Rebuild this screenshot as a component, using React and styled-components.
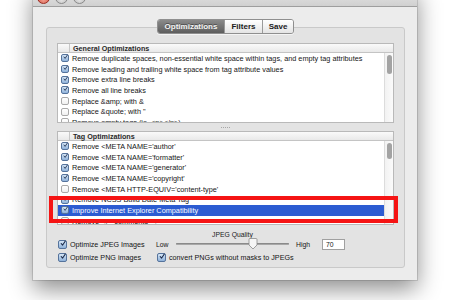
import React from 'react'
import styled, { createGlobalStyle } from 'styled-components'

const GlobalStyle = createGlobalStyle`
    html, body {
        margin: 0;
        padding: 0;
        background: #fff;
    }
    body {
        font-family: "Liberation Sans", Arial, sans-serif;
        font-size: 7.3px;
        color: #141414;
    }
`

const Stage = styled.div`
    width: 450px;
    height: 300px;
    overflow: hidden;
    padding-left: 33px;
    box-sizing: border-box;
    background: #fff;
`

const Window = styled.div`
    width: 384px;
    height: 294px;
    margin-top: -14px;
    background: #ececec;
    display: flex;
    flex-direction: column;
    box-shadow: 0 9px 22px rgba(0, 0, 0, 0.45), 0 0 0 1px rgba(0, 0, 0, 0.12);
`

const TitleBar = styled.div`
    height: 20px;
    flex: none;
    position: relative;
    display: flex;
    align-items: center;
    gap: 5px;
    padding-left: 4px;
    background: linear-gradient(#ececec, #d0d0d0);
    border-bottom: 1px solid #9e9e9e;
`

const Light = styled.span`
    width: 11px;
    height: 11px;
    border-radius: 50%;
    background: ${p => p.red ? 'radial-gradient(circle at 50% 70%, #f2a090, #c83a2a)' : 'radial-gradient(circle at 50% 70%, #e6e6e6, #a8a8a8)'};
    border: 1px solid ${p => p.red ? '#9a2a20' : '#8a8a8a'};
    margin-top: 2px;
`

const Title = styled.div`
    position: absolute;
    left: 0;
    right: 0;
    top: 3px;
    text-align: center;
    font-size: 12px;
    color: #3a3a3a;
`

const Body = styled.div`
    flex: 1;
    display: flex;
    flex-direction: column;
    padding: 12px 12px 12px 13px;
`

const Segments = styled.div`
    align-self: center;
    display: flex;
    height: 13px;
    margin-bottom: -7px;
    position: relative;
    z-index: 2;
    border: 1px solid #8f8f8f;
    border-radius: 3px;
    overflow: hidden;
    box-shadow: 0 1px 0 rgba(255, 255, 255, 0.6);
`

const Segment = styled.div`
    display: flex;
    align-items: center;
    justify-content: center;
    width: ${p => p.w}px;
    font-size: 8px;
    font-weight: bold;
    color: ${p => p.active ? '#f4f4f4' : '#202020'};
    background: ${p => p.active ? 'linear-gradient(#8a8a8a, #5e5e5e)' : 'linear-gradient(#ffffff, #e4e4e4)'};
    border-left: ${p => p.first ? 'none' : '1px solid #9a9a9a'};
    text-shadow: ${p => p.active ? '0 -1px 0 rgba(0,0,0,0.4)' : 'none'};
`

const Panel = styled.div`
    flex: 1;
    position: relative;
    display: flex;
    flex-direction: column;
    padding: 15px 10px 0 10px;
    background: #e3e3e3;
    border: 1px solid #c9c9c9;
    border-radius: 3px;
`

const List = styled.div`
    height: ${p => p.h}px;
    flex: none;
    display: flex;
    flex-direction: column;
    background: #fff;
    border: 1px solid #b9b9b9;
    box-sizing: border-box;
    overflow: hidden;
`

const Header = styled.div`
    height: 8px;
    flex: none;
    display: flex;
    background: linear-gradient(#fafafa, #e9e9e9);
    border-bottom: 1px solid #c4c4c4;
    font-weight: bold;
    font-size: 7.2px;
    color: #2a2a2a;
`

const HeadCell = styled.div`
    width: ${p => p.w ? p.w + 'px' : 'auto'};
    flex: ${p => p.w ? 'none' : '1'};
    display: flex;
    align-items: center;
    padding-left: ${p => p.pad || 0}px;
    border-right: ${p => p.line ? '1px solid #c8c8c8' : 'none'};
`

const ListBody = styled.div`
    flex: 1;
    display: flex;
    min-height: 0;
`

const Rows = styled.div`
    flex: 1;
    min-width: 0;
`

const Row = styled.div`
    height: 10.7px;
    display: flex;
    align-items: center;
    gap: 3px;
    padding-left: 3px;
    white-space: nowrap;
    background: ${p => p.selected ? '#2c5cd2' : 'transparent'};
    color: ${p => p.selected ? '#fff' : '#161616'};
`

const Track = styled.div`
    width: 9px;
    flex: none;
    border-left: 1px solid #dcdcdc;
    background: linear-gradient(90deg, #f2f2f2, #fbfbfb);
    padding: 2px 0 0 2px;
    box-sizing: border-box;
`

const Thumb = styled.div`
    width: 5px;
    height: ${p => p.h}px;
    margin-top: ${p => p.top}px;
    border-radius: 3px;
    background: #a3a3a3;
`

const Box = styled.span`
    width: ${p => p.size}px;
    height: ${p => p.size}px;
    flex: none;
    box-sizing: border-box;
    border-radius: 2px;
    border: 1px solid ${p => p.on ? '#55739c' : '#a9a9a9'};
    background: ${p => p.on ? 'linear-gradient(#d6e6f6, #8fb2da)' : 'linear-gradient(#ffffff, #f0f0f0)'};
    display: flex;
    align-items: center;
    justify-content: center;
    overflow: visible;
`

const Splitter = styled.div`
    height: 8px;
    flex: none;
    display: flex;
    align-items: center;
    justify-content: center;
    gap: 1px;
`

const Dot = styled.span`
    width: 1px;
    height: 1px;
    background: #a6a6a6;
`

const Controls = styled.div`
    display: grid;
    grid-template-columns: 99px 20px 113px 33px 24px;
    grid-template-rows: 8px 12px 14px;
    margin-top: 5px;
    align-items: center;
`

const Check = styled.div`
    display: flex;
    align-items: center;
    gap: 3px;
    padding-left: 1px;
    font-size: 7.2px;
    white-space: nowrap;
    grid-column: ${p => p.col || 'auto'};
    grid-row: ${p => p.row};
`

const QualityLabel = styled.div`
    grid-column: 3;
    grid-row: 1;
    text-align: center;
    font-size: 6.8px;
    color: #202020;
`

const Small = styled.div`
    grid-row: 2;
    font-size: 6.8px;
    padding-left: ${p => p.pad || 0}px;
`

const Slider = styled.div`
    grid-column: 3;
    grid-row: 2;
    position: relative;
    height: 12px;
    display: flex;
    align-items: center;
`

const Rail = styled.div`
    flex: 1;
    height: 2px;
    border-radius: 1px;
    background: #a8a8a8;
    box-shadow: inset 0 1px 0 #8a8a8a;
`

const Knob = styled.svg`
    position: absolute;
    left: 72px;
    top: 0;
`

const Field = styled.div`
    grid-column: 5;
    grid-row: 2;
    height: 11px;
    box-sizing: border-box;
    border: 1px solid #a0a0a0;
    background: #fff;
    font-size: 6.8px;
    display: flex;
    align-items: center;
    padding-left: 3px;
    width: 23px;
`

const Highlight = styled.div`
    position: absolute;
    left: 2px;
    top: 168px;
    width: 349px;
    height: 27px;
    box-sizing: border-box;
    border: 4px solid #f51414;
    pointer-events: none;
`

const Tick = ({ size }) => (
    <svg width={size + 2} height={size + 2} viewBox="0 0 10 10" style={{ marginTop: -2, marginLeft: 1 }}>
        <path d="M2 5 L4.2 7.8 L8.8 1" fill="none" stroke="#1c2c4c" strokeWidth="1.7" strokeLinecap="round" strokeLinejoin="round" />
    </svg>
)

const CheckBox = ({ on, size = 8 }) => (
    <Box on={on} size={size}>{on && <Tick size={size} />}</Box>
)

const general = [
    [true, 'Remove duplicate spaces, non-essential white space within tags, and empty tag attributes'],
    [true, 'Remove leading and trailing white space from tag attribute values'],
    [true, 'Remove extra line breaks'],
    [true, 'Remove all line breaks'],
    [false, 'Replace &amp; with &'],
    [false, 'Replace &quote; with "'],
    [false, 'Remove empty tags (ie. <p></p>)'],
]

const tags = [
    [true, "Remove <META NAME='author'"],
    [true, "Remove <META NAME='formatter'"],
    [true, "Remove <META NAME='generator'"],
    [true, "Remove <META NAME='copyright'"],
    [false, "Remove <META HTTP-EQUIV='content-type'"],
    [true, 'Remove NCSS Build Date Meta Tag'],
    [true, 'Improve Internet Explorer Compatibility', true],
    [false, 'Remove <!-- comments -->'],
]

const OptionList = ({ title, items, h, thumb }) => (
    <List h={h}>
        <Header>
            <HeadCell w={11} line />
            <HeadCell pad={3}>{title}</HeadCell>
            <HeadCell w={9} />
        </Header>
        <ListBody>
            <Rows>
                {items.map(([on, text, selected]) => (
                    <Row key={text} selected={selected}>
                        <CheckBox on={on} />
                        <span>{text}</span>
                    </Row>
                ))}
            </Rows>
            <Track>
                <Thumb h={thumb.h} top={thumb.top} />
            </Track>
        </ListBody>
    </List>
)

export default function App() {
    return (
        <Stage>
            <GlobalStyle />
            <Window>
                <TitleBar>
                    <Light red />
                    <Light />
                    <Light />
                    <Title>Preferences</Title>
                </TitleBar>
                <Body>
                    <Segments>
                        <Segment first active w={66}>Optimizations</Segment>
                        <Segment w={37}>Filters</Segment>
                        <Segment w={30}>Save</Segment>
                    </Segments>
                    <Panel>
                        <OptionList title="General Optimizations" items={general} h={80} thumb={{ top: 0, h: 19 }} />
                        <Splitter>
                            {[0, 1, 2, 3, 4].map(i => <Dot key={i} />)}
                        </Splitter>
                        <OptionList title="Tag Optimizations" items={tags} h={94} thumb={{ top: 0, h: 16 }} />
                        <Controls>
                            <QualityLabel>JPEG Quality</QualityLabel>
                            <Check row={2}><CheckBox on size={9} />Optimize JPEG Images</Check>
                            <Small>Low</Small>
                            <Slider>
                                <Rail />
                                <Knob width="10" height="12" viewBox="0 0 10 12">
                                    <path d="M1 1.5 Q1 0.5 2 0.5 H8 Q9 0.5 9 1.5 V7 L5 11 L1 7 Z" fill="#f6f6f6" stroke="#8a8a8a" strokeWidth="0.8" />
                                </Knob>
                            </Slider>
                            <Small pad={7}>High</Small>
                            <Field>70</Field>
                            <Check row={3}><CheckBox on size={9} />Optimize PNG images</Check>
                            <Check row={3} col="2 / 6"><CheckBox on size={9} />convert PNGs without masks to JPEGs</Check>
                        </Controls>
                        <Highlight />
                    </Panel>
                </Body>
            </Window>
        </Stage>
    )
}
